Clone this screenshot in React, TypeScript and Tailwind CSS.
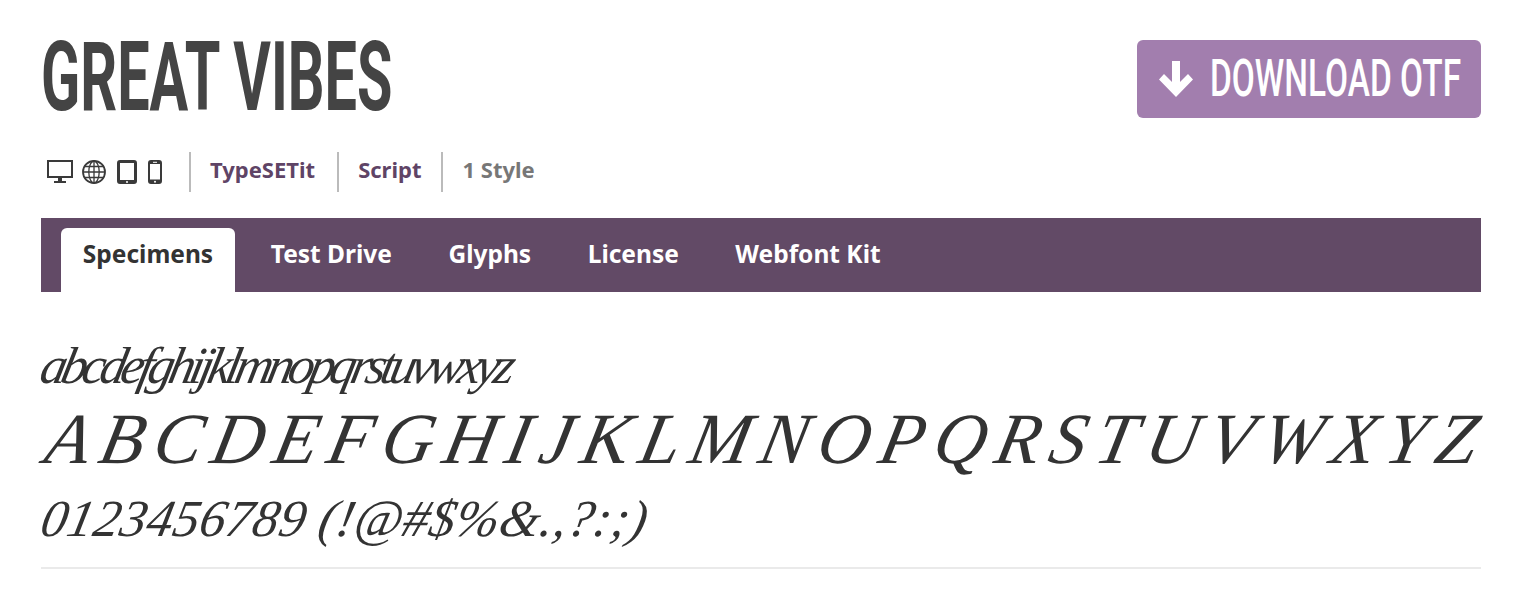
const tabs = ["Test Drive", "Glyphs", "License", "Webfont Kit"];

function DeviceIcons() {
  return (
    <div className="flex items-center pl-[6px] pr-[27px]">
      {/* desktop */}
      <svg width="26" height="24" viewBox="0 0 26 24" className="text-[#3a3a3a]">
        <rect x="1" y="1" width="24" height="16" fill="none" stroke="currentColor" strokeWidth="2" />
        <rect x="11" y="18" width="4" height="3" fill="currentColor" />
        <rect x="7" y="21" width="12" height="2" fill="currentColor" />
      </svg>
      {/* web */}
      <svg width="24" height="24" viewBox="0 0 24 24" className="ml-[9px] text-[#3a3a3a]" fill="none" stroke="currentColor">
        <circle cx="12" cy="12" r="11" strokeWidth="1.8" />
        <ellipse cx="12" cy="12" rx="5.2" ry="11" strokeWidth="1.3" />
        <path d="M12 1v22M1 12h22M2.6 6.5h18.8M2.6 17.5h18.8" strokeWidth="1.3" />
      </svg>
      {/* tablet */}
      <svg width="20" height="24" viewBox="0 0 20 24" className="ml-[11px] text-[#3a3a3a]">
        <path fillRule="evenodd" fill="currentColor" d="M3 0h14a3 3 0 0 1 3 3v18a3 3 0 0 1-3 3H3a3 3 0 0 1-3-3V3a3 3 0 0 1 3-3zM3 3v17h14V3z" />
        <circle cx="10" cy="22" r="1" fill="#fff" />
      </svg>
      {/* phone */}
      <svg width="14" height="24" viewBox="0 0 14 24" className="ml-[11px] text-[#3a3a3a]">
        <path fillRule="evenodd" fill="currentColor" d="M3 0h8a3 3 0 0 1 3 3v18a3 3 0 0 1-3 3H3a3 3 0 0 1-3-3V3a3 3 0 0 1 3-3zM2 4v15.500h10V4z" />
        <rect x="5" y="1.800" width="4" height="1" fill="#fff" />
        <circle cx="7" cy="21.700" r="1" fill="#fff" />
      </svg>
    </div>
  );
}

export default function App() {
  return (
    <main className="min-h-screen bg-white pl-[41px] pr-[51px] font-['Noto_Sans',sans-serif]">

      {/* ================= HEADER ================= */}
      <header className="flex justify-between pt-[40px]">
        <h1 className="h-[78px] w-[350px] origin-left scale-x-[0.6] whitespace-nowrap font-['Roboto',sans-serif] text-[96px] leading-[74px] font-bold text-[#444]">
          GREAT VIBES
        </h1>

        <a className="flex h-[78px] w-[344px] items-center rounded-[6px] bg-[#a27eae] pl-[22px] text-white">
          <svg width="34" height="36" viewBox="0 0 34 36" fill="currentColor" className="shrink-0">
            <path d="M13 0h8v21l8-8 5 5.500L17 36 0 18.500 5 13l8 8z" />
          </svg>
          <span className="ml-[17px] w-[251px] origin-left scale-x-[0.643] whitespace-nowrap font-['Roboto',sans-serif] text-[52px] leading-none font-medium">
            DOWNLOAD OTF
          </span>
        </a>
      </header>

      {/* ================= META ROW ================= */}
      <div className="mt-[34px] flex h-[40px] items-center text-[22px] font-bold">
        <DeviceIcons />
        <span className="flex h-full items-center border-l-2 border-[#bbb] pb-[6px] pl-[19px] pr-[22px] text-[#5f4466]">TypeSETit</span>
        <span className="flex h-full items-center border-l-2 border-[#bbb] pb-[6px] pl-[19px] pr-[20px] text-[#5f4466]">Script</span>
        <span className="flex h-full items-center border-l-2 border-[#bbb] pb-[6px] pl-[19px] text-[#777]">1 Style</span>
      </div>

      {/* ================= TABS ================= */}
      <nav className="mt-[26px] flex h-[74px] items-end bg-[#624a66] pl-[20px] text-[24.500px] font-bold text-white">
        <div className="mr-[7.500px] flex h-[64px] w-[174px] items-center justify-center rounded-t-[6px] bg-white pb-[11px] text-[#333]">
          Specimens
        </div>
        {tabs.map((t) => (
          <div key={t} className="flex h-[74px] items-center px-[28.250px] pb-[2px]">
            {t}
          </div>
        ))}
      </nav>

      {/* ================= SPECIMEN ================= */}
      <section className="mt-[39px] border-b-2 border-[#eaeaea] pb-[15px] font-['Liberation_Serif',serif] italic text-[#333]">
        <div className="-ml-[6px] h-[66px] origin-bottom-left -skew-x-12 whitespace-nowrap text-[52px] leading-[69px] tracking-[-5.200px]">abcdefghijklmnopqrstuvwxyz</div>
        <div className="-ml-[3px] h-[86px] origin-bottom-left -skew-x-12 whitespace-nowrap text-[72px] leading-[84px] tracking-[10px]">ABCDEFGHIJKLMNOPQRSTUVWXYZ</div>
        <div className="-ml-[6px] h-[69px] origin-bottom-left -skew-x-12 whitespace-nowrap text-[52px] leading-[71px] tracking-[0.450px]">0123456789 (!@#$%&amp;.,?:;)</div>
      </section>
    </main>
  );
}
